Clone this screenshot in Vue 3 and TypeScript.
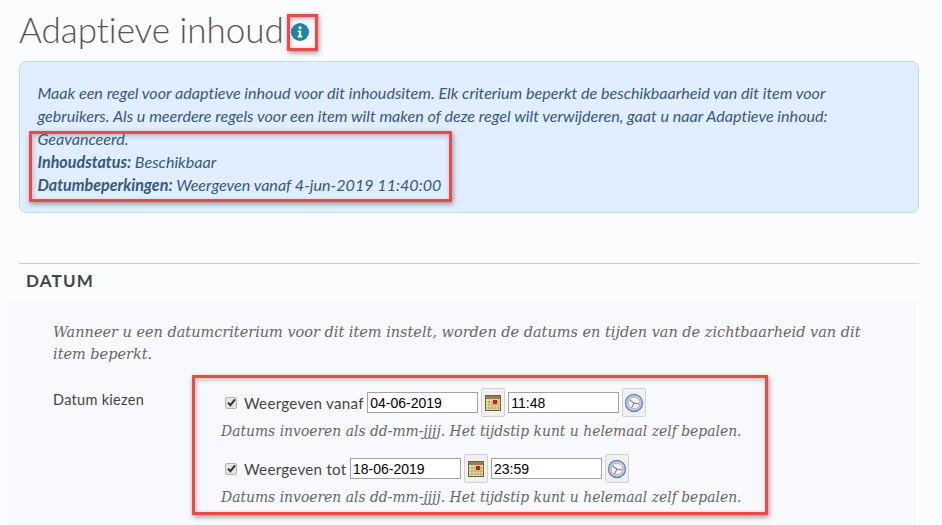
<script setup lang="ts">
interface DateRow {
  label: string
  date: string
  time: string
}

// Weergaveperiode uit het formulier
const rows: DateRow[] = [
  { label: 'Weergeven vanaf', date: '04-06-2019', time: '11:48' },
  { label: 'Weergeven tot', date: '18-06-2019', time: '23:59' },
]

const hint = 'Datums invoeren als dd-mm-jjjj. Het tijdstip kunt u helemaal zelf bepalen.'
</script>

<template>
  <div class="page">
    <header class="title-row">
      <h1>Adaptieve inhoud</h1>
      <span class="info-wrap">
        <svg class="info" width="18" height="18" viewBox="0 0 18 18">
          <circle cx="9" cy="9" r="9" fill="#1b85ab" />
          <circle cx="9" cy="4.8" r="1.5" fill="#fff" />
          <path d="M6.8 7.4h3.4v5.4h1.2v1.6H6.7v-1.6h1.2V9H6.8z" fill="#fff" />
        </svg>
        <span class="mark mark-icon"></span>
      </span>
    </header>

    <section class="alert">
      <p class="alert-text">
        Maak een regel voor adaptieve inhoud voor dit inhoudsitem. Elk criterium beperkt de beschikbaarheid van dit item voor
        gebruikers. Als u meerdere regels voor een item wilt maken of deze regel wilt verwijderen, gaat u naar Adaptieve inhoud:
        Geavanceerd.
      </p>
      <p><strong>Inhoudstatus:</strong> Beschikbaar</p>
      <p><strong>Datumbeperkingen:</strong> Weergeven vanaf 4-jun-2019 11:40:00</p>
      <span class="mark mark-status"></span>
    </section>

    <h2>DATUM</h2>

    <section class="panel">
      <p class="intro">
        Wanneer u een datumcriterium voor dit item instelt, worden de datums en tijden van de zichtbaarheid van dit
        item beperkt.
      </p>
      <div class="field">
        <div class="field-label">Datum kiezen</div>
        <div class="field-body">
          <div v-for="row in rows" :key="row.label" class="date-row">
            <div class="controls">
              <span class="check">
                <svg width="9" height="9" viewBox="0 0 9 9">
                  <path d="M1 4.6l2.4 2.6L8 1.4" fill="none" stroke="#333" stroke-width="2" />
                </svg>
              </span>
              <label>{{ row.label }}</label>
              <input type="text" :value="row.date" />
              <button type="button">
                <svg width="16" height="16" viewBox="0 0 16 16">
                  <rect x="0.5" y="0.5" width="15" height="15" fill="#f7e9a6" stroke="#6b6238" />
                  <rect x="1" y="1" width="14" height="3" fill="#8d8250" />
                  <path d="M1 7h14M1 10h14M1 13h14M4 4v11M7 4v11M10 4v11M13 4v11" stroke="#b0a46c" stroke-width="1" />
                  <rect x="8" y="5" width="4" height="4" fill="#d9122b" />
                </svg>
              </button>
              <input type="text" :value="row.time" />
              <button type="button">
                <svg width="20" height="20" viewBox="0 0 20 20">
                  <circle cx="10" cy="10" r="8.5" fill="#c3d3e8" stroke="#6f87a8" stroke-width="1.4" />
                  <circle cx="10" cy="10" r="6" fill="#eef3fa" stroke="#9db2cf" />
                  <path d="M10 10L5.5 7" stroke="#5a6f8e" stroke-width="1" />
                  <path d="M10 10L15 11M10 10L7.5 15" stroke="#d8465a" stroke-width="1" />
                </svg>
              </button>
            </div>
            <p class="hint">{{ hint }}</p>
          </div>
          <span class="mark mark-dates"></span>
        </div>
      </div>
    </section>
  </div>
</template>

<style scoped>
.page {
  width: 942px;
  height: 525px;
  overflow: hidden;
  box-sizing: border-box;
  padding-top: 9px;
  color: #444;
  font-family: Lato, sans-serif;
  font-variant-ligatures: none;
}

.title-row {
  display: flex;
  align-items: center;
  height: 41px;
  margin-left: 19px;
}

h1 {
  margin: 0;
  font-size: 35px;
  font-weight: 300;
  line-height: 41px;
  color: #555;
}

.info-wrap {
  position: relative;
  display: flex;
  margin: 5px 0 0 7px;
}

.alert {
  position: relative;
  box-sizing: border-box;
  width: 900px;
  height: 152px;
  margin: 11px 0 0 19px;
  padding: 19px 17.5px;
  background: #e1eeff;
  border: 1px solid #c0daf6;
  border-radius: 7px;
  color: #36587f;
  font-size: 16.1px;
  font-style: italic;
  line-height: 23px;
}

.alert p {
  margin: 0;
}

.alert .alert-text {
  width: 820px;
}

h2 {
  box-sizing: border-box;
  width: 900px;
  height: 38px;
  margin: 50px 0 0 19px;
  padding-left: 7px;
  border-top: 1px solid #ccced2;
  color: #444;
  font-size: 17px;
  font-weight: 700;
  letter-spacing: 1.2px;
  line-height: 34px;
}

.panel {
  width: 908px;
  height: 223px;
  margin-left: 8px;
  padding-top: 20px;
  background: #f8f9fd;
}

.intro {
  margin: 0 0 0 45px;
  width: 820px;
  color: #666;
  font-family: "DejaVu Serif", serif;
  font-size: 14.47px;
  font-style: italic;
  line-height: 22px;
}

.field {
  display: flex;
  margin: 23px 0 0 45px;
}

.field-label {
  width: 139px;
  padding-top: 2px;
  font-size: 14.5px;
  letter-spacing: 0.3px;
  line-height: 20px;
}

.field-body {
  position: relative;
  flex: 1;
}

.date-row {
  height: 66px;
}

.controls {
  display: flex;
  align-items: center;
  height: 29px;
  margin-left: 33px;
}

.check {
  display: flex;
  align-items: center;
  justify-content: center;
  box-sizing: border-box;
  width: 12px;
  height: 12px;
  margin-right: 7px;
  background: #e4e4e4;
  border: 1px solid #b4b4b4;
  border-radius: 2px;
}

label {
  margin-right: 3.5px;
  font-size: 15.2px;
  letter-spacing: 0.25px;
}

input {
  box-sizing: border-box;
  width: 111px;
  height: 21px;
  padding: 0 2px;
  background: #fff;
  border: 1px solid #a3a3a3;
  border-radius: 0;
  color: #000;
  font-family: "Liberation Sans", Arial, sans-serif;
  font-size: 14px;
}

button {
  display: flex;
  align-items: center;
  justify-content: center;
  box-sizing: border-box;
  width: 24px;
  height: 29px;
  margin: 0 3px;
  padding: 0;
  background: #f0f0f0;
  border: 1px solid #d2d2d2;
  border-radius: 2px;
}

.hint {
  margin: 4px 0 0 29px;
  color: #666;
  font-family: "DejaVu Serif", serif;
  font-size: 13.9px;
  font-style: italic;
  line-height: 20px;
  white-space: nowrap;
}

.mark {
  position: absolute;
  box-sizing: border-box;
  border: 3px solid #fa4444;
  box-shadow: 1px 2px 5px rgba(60, 60, 60, 0.5), inset 1px 2px 5px rgba(60, 60, 60, 0.3);
  pointer-events: none;
}

.mark-icon {
  left: -4px;
  top: -9px;
  width: 31px;
  height: 37px;
}

.mark-status {
  left: 9px;
  top: 69px;
  width: 423px;
  height: 71px;
}

.mark-dates {
  left: 0;
  top: -13px;
  width: 576px;
  height: 140px;
}
</style>

<style>
html,
body {
  margin: 0;
  background: #fbfcfe;
}
</style>
